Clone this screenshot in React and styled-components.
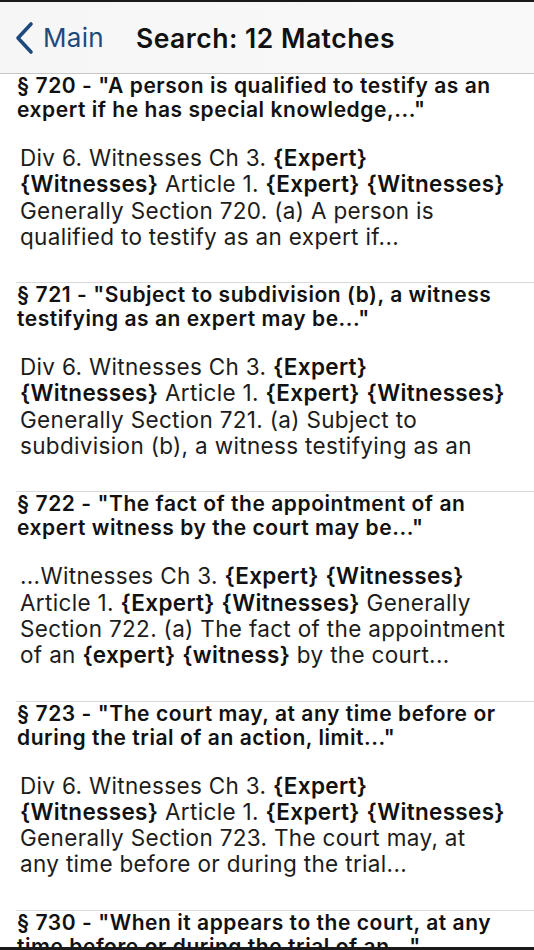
import React from 'react';
import styled, { createGlobalStyle } from 'styled-components';

const GlobalStyle = createGlobalStyle`
  html, body {
    margin: 0;
    padding: 0;
    background: #fff;
  }
  body {
    font-family: Inter, "Noto Sans", "Liberation Sans", sans-serif;
    -webkit-font-smoothing: antialiased;
  }
`;

const Screen = styled.div`
  width: 534px;
  height: 950px;
  overflow: hidden;
  display: flex;
  flex-direction: column;
  background: #fff;
  border-top: 2px solid #1a1a1a;
  border-bottom: 3px solid #1a1a1a;
  box-sizing: border-box;
`;

const NavBar = styled.div`
  flex: none;
  height: 72px;
  display: flex;
  align-items: center;
  background: linear-gradient(90deg, #f6f6f6, #f9f9f9);
  border-bottom: 1px solid #c6c6c6;
  box-sizing: border-box;
  padding-left: 14px;
`;

const BackButton = styled.div`
  display: flex;
  align-items: center;
  gap: 9px;
  color: #1d4a7c;
  font-size: 26px;
  letter-spacing: 0.3px;
  margin-right: 32px;
`;

const NavTitle = styled.div`
  font-size: 26.5px;
  font-weight: 600;
  color: #111;
  letter-spacing: 0.5px;
`;

const List = styled.div`
  flex: 1;
  overflow: hidden;
`;

const Row = styled.div`
  padding: 0 0 32px 0;
  border-top: ${(p) => (p.$first ? 'none' : '1px solid #d9d9d9')};
  margin-left: 16px;
`;

const RowTitle = styled.div`
  font-size: 21px;
  line-height: 24px;
  font-weight: 600;
  letter-spacing: 0.55px;
  color: #111;
  padding: 0 4px 0 1px;
  white-space: nowrap;
`;

const RowBody = styled.div`
  margin-top: 23px;
  padding-left: 4px;
  font-size: 22.5px;
  line-height: 26.3px;
  letter-spacing: 0.33px;
  color: #1c1c1c;
  white-space: nowrap;
`;

const Line = styled.div``;

const Hit = styled.b`
  font-weight: 600;
  color: #111;
`;

const results = [
  {
    title: ['§ 720 - "A person is qualified to testify as an', 'expert if he has special knowledge,..."'],
    body: [
      'Div 6. Witnesses Ch 3. {Expert}',
      '{Witnesses} Article 1. {Expert} {Witnesses}',
      'Generally Section 720. (a) A person is',
      'qualified to testify as an expert if...',
    ],
  },
  {
    title: ['§ 721 - "Subject to subdivision (b), a witness', 'testifying as an expert may be..."'],
    body: [
      'Div 6. Witnesses Ch 3. {Expert}',
      '{Witnesses} Article 1. {Expert} {Witnesses}',
      'Generally Section 721. (a) Subject to',
      'subdivision (b), a witness testifying as an',
    ],
  },
  {
    title: ['§ 722 - "The fact of the appointment of an', 'expert witness by the court may be..."'],
    body: [
      '...Witnesses Ch 3. {Expert} {Witnesses}',
      'Article 1. {Expert} {Witnesses} Generally',
      'Section 722. (a) The fact of the appointment',
      'of an {expert} {witness} by the court...',
    ],
  },
  {
    title: ['§ 723 - "The court may, at any time before or', 'during the trial of an action, limit..."'],
    body: [
      'Div 6. Witnesses Ch 3. {Expert}',
      '{Witnesses} Article 1. {Expert} {Witnesses}',
      'Generally Section 723. The court may, at',
      'any time before or during the trial...',
    ],
  },
  {
    title: ['§ 730 - "When it appears to the court, at any', 'time before or during the trial of an..."'],
    body: [],
  },
];

const renderLine = (text) =>
  text.split(/(\{[^}]+\})/).map((part, i) =>
    /^\{.*\}$/.test(part) ? <Hit key={i}>{part}</Hit> : <span key={i}>{part}</span>
  );

const Chevron = () => (
  <svg width="20" height="34" viewBox="0 0 20 34">
    <path d="M17 3 L4 17 L17 31" fill="none" stroke="#1d4a7c" strokeWidth="3.6" strokeLinecap="round" strokeLinejoin="round" />
  </svg>
);

const App = () => (
  <>
    <GlobalStyle />
    <Screen>
      <NavBar>
        <BackButton>
          <Chevron />
          Main
        </BackButton>
        <NavTitle>Search: 12 Matches</NavTitle>
      </NavBar>
      <List>
        {results.map((r, i) => (
          <Row key={i} $first={i === 0}>
            <RowTitle>
              {r.title.map((t, j) => (
                <Line key={j}>{t}</Line>
              ))}
            </RowTitle>
            {r.body.length > 0 && (
              <RowBody>
                {r.body.map((t, j) => (
                  <Line key={j}>{renderLine(t)}</Line>
                ))}
              </RowBody>
            )}
          </Row>
        ))}
      </List>
    </Screen>
  </>
);

export default App;
